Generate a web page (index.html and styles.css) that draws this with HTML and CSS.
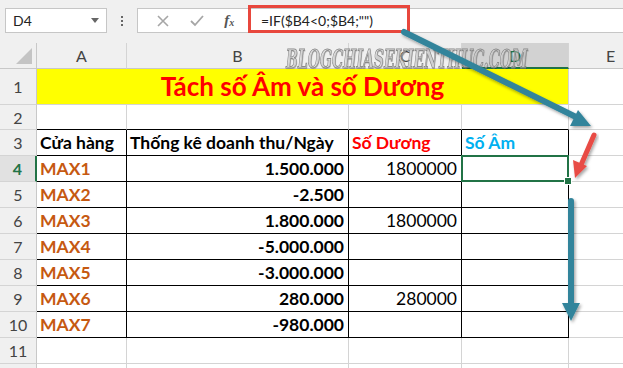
FILE: index.html
```html
<!DOCTYPE html>
<html lang="vi">
<head>
  <meta charset="UTF-8">
  <meta name="viewport" content="width=device-width, initial-scale=1.0">
  <title>Tách số Âm và số Dương</title>
  <link rel="stylesheet" href="styles.css">
</head>
<body>
  <div class="app">
    <div class="toolbar">
      <div class="namebox"><span>D4</span><span class="caret"></span></div>
      <div class="dots"><i></i><i></i><i></i></div>
      <div class="fbar">
        <div class="fbtns">
          <svg width="14" height="14" viewBox="0 0 14 14"><path d="M2 2 L12 12 M12 2 L2 12" stroke="#a6a6a6" stroke-width="1.6" fill="none"/></svg>
          <svg width="16" height="14" viewBox="0 0 16 14"><path d="M2 7 L6 11 L14 2" stroke="#a6a6a6" stroke-width="1.8" fill="none"/></svg>
          <span class="fx">f<sub>x</sub></span>
        </div>
        <div class="finput">=IF($B4&lt;0;$B4;"")</div>
      </div>
    </div>

    <div class="sheet">
      <div class="corner"></div>
      <div class="ch">A</div>
      <div class="ch">B</div>
      <div class="ch">C</div>
      <div class="ch on">D</div>
      <div class="ch">E</div>

      <div class="rh r1">1</div>
      <div class="title">Tách số Âm và số Dương</div>
      <div class="c"></div>

      <div class="rh">2</div>
      <div class="c top"></div>
      <div class="c top"></div>
      <div class="c top"></div>
      <div class="c top"></div>
      <div class="c"></div>

      <div class="rh">3</div>
      <div class="c t b">Cửa hàng</div>
      <div class="c t b">Thống kê doanh thu/Ngày</div>
      <div class="c t b red">Số Dương</div>
      <div class="c t b blue">Số Âm</div>
      <div class="c"></div>

      <div class="rh on">4</div>
      <div class="c t b org">MAX1</div>
      <div class="c t b num">1.500.000</div>
      <div class="c t num">1800000</div>
      <div class="c t sel"></div>
      <div class="c"></div>

      <div class="rh">5</div>
      <div class="c t b org">MAX2</div>
      <div class="c t b num">-2.500</div>
      <div class="c t"></div>
      <div class="c t"></div>
      <div class="c"></div>

      <div class="rh">6</div>
      <div class="c t b org">MAX3</div>
      <div class="c t b num">1.800.000</div>
      <div class="c t num">1800000</div>
      <div class="c t"></div>
      <div class="c"></div>

      <div class="rh">7</div>
      <div class="c t b org">MAX4</div>
      <div class="c t b num">-5.000.000</div>
      <div class="c t"></div>
      <div class="c t"></div>
      <div class="c"></div>

      <div class="rh">8</div>
      <div class="c t b org">MAX5</div>
      <div class="c t b num">-3.000.000</div>
      <div class="c t"></div>
      <div class="c t"></div>
      <div class="c"></div>

      <div class="rh">9</div>
      <div class="c t b org">MAX6</div>
      <div class="c t b num">280.000</div>
      <div class="c t num">280000</div>
      <div class="c t"></div>
      <div class="c"></div>

      <div class="rh">10</div>
      <div class="c t b org">MAX7</div>
      <div class="c t b num">-980.000</div>
      <div class="c t"></div>
      <div class="c t"></div>
      <div class="c"></div>

      <div class="rh">11</div>
      <div class="c"></div>
      <div class="c"></div>
      <div class="c"></div>
      <div class="c"></div>
      <div class="c"></div>

      <div class="rh"></div>
      <div class="c"></div>
      <div class="c"></div>
      <div class="c"></div>
      <div class="c"></div>
      <div class="c"></div>
    </div>

    <div class="watermark">BLOGCHIASEKIENTHUC.COM</div>

    <svg class="overlay" width="623" height="368" viewBox="0 0 623 368">
      <defs>
        <filter id="sh" x="-20%" y="-20%" width="140%" height="140%">
          <feDropShadow dx="1.5" dy="2" stdDeviation="1.5" flood-color="#000" flood-opacity="0.35"/>
        </filter>
      </defs>
      <rect x="249.5" y="6.5" width="159" height="25" fill="none" stroke="#e8473d" stroke-width="3"/>
      <g filter="url(#sh)" fill="#31849b" stroke="#31849b">
        <line x1="404" y1="32" x2="576" y2="117" stroke-width="6" stroke-linecap="round"/>
        <polygon points="591,126 578,110 570,126" stroke="none"/>
        <line x1="571" y1="201" x2="571" y2="305" stroke-width="6" stroke-linecap="round"/>
        <polygon points="562,303 580,303 571,321" stroke="none"/>
      </g>
      <g filter="url(#sh)" fill="#e84c45" stroke="#e84c45">
        <line x1="594" y1="135" x2="581" y2="165" stroke-width="5" stroke-linecap="round"/>
        <polygon points="575,178 587,166 573,160" stroke="none"/>
      </g>
    </svg>
  </div>
</body>
</html>
```

FILE: styles.css
```css
body {
  margin: 0;
  overflow: hidden;
  background: #fff;
  font-family: 'Lato', 'Noto Sans', sans-serif;
}
.app {
  position: relative;
  width: 623px;
  height: 368px;
  overflow: hidden;
}

/* formula bar */
.toolbar {
  height: 43px;
  background: #f0f0f0;
  display: flex;
  align-items: flex-start;
  padding: 8px 0 0 5px;
  box-sizing: border-box;
}
.namebox {
  width: 102px;
  height: 25px;
  box-sizing: border-box;
  background: #fff;
  border: 1px solid #c6c6c6;
  display: flex;
  align-items: center;
  justify-content: space-between;
  padding: 0 7px 0 7px;
  font-size: 14px;
  color: #222;
}
.caret {
  width: 0;
  height: 0;
  border-left: 4px solid transparent;
  border-right: 4px solid transparent;
  border-top: 5px solid #666;
}
.dots {
  width: 30px;
  height: 25px;
  display: flex;
  flex-direction: column;
  align-items: center;
  justify-content: center;
  gap: 2px;
}
.dots i {
  width: 2px;
  height: 2px;
  background: #666;
}
.fbar {
  flex: 1;
  height: 25px;
  display: flex;
  background: #fff;
  border: 1px solid #c6c6c6;
  border-right: none;
  box-sizing: border-box;
}
.fbtns {
  width: 110px;
  display: flex;
  align-items: center;
  justify-content: space-around;
  padding: 0 4px 0 8px;
  box-sizing: border-box;
}
.fx {
  font-family: 'Liberation Serif', serif;
  font-style: italic;
  font-weight: bold;
  font-size: 15px;
  color: #555;
}
.fx sub {
  font-size: 10px;
  vertical-align: -1px;
}
.finput {
  flex: 1;
  padding-left: 13px;
  font-size: 14px;
  line-height: 23px;
  color: #222;
}

/* grid */
.sheet {
  display: grid;
  grid-template-columns: 37px 90px 222px 113px 107px 84px;
  grid-template-rows: 26px 36px 25px repeat(10, 26px);
  width: 653px;
}
.sheet > div {
  box-sizing: border-box;
  border-right: 1px solid #d4d4d4;
  border-bottom: 1px solid #d4d4d4;
  white-space: nowrap;
  overflow: hidden;
}
.corner {
  background: #f0f0f0;
  position: relative;
  border-color: #c8c8c8 !important;
}
.corner::after {
  content: '';
  position: absolute;
  right: 4px;
  bottom: 4px;
  width: 0;
  height: 0;
  border-left: 16px solid transparent;
  border-bottom: 16px solid #c4c4c4;
}
.ch {
  background: #f0f0f0;
  text-align: center;
  font-size: 16px;
  line-height: 25px;
  color: #444;
  border-bottom-color: #c8c8c8 !important;
}
.ch.on {
  background: #d2d2d2;
  color: #217346;
  border-bottom: 2px solid #217346 !important;
}
.rh {
  background: #f0f0f0;
  text-align: center;
  font-size: 16px;
  line-height: 22px;
  padding-top: 2px;
  color: #444;
  border-right-color: #c8c8c8 !important;
}
.rh.r1 {
  padding-top: 7px;
}
.rh.on {
  background: #e1e1e1;
  color: #217346;
  font-weight: bold;
  border-right: 2px solid #217346 !important;
}
.title {
  grid-column: 2 / 6;
  background: #ffff00;
  color: #ff0000;
  font-weight: bold;
  font-size: 26px;
  line-height: 32px;
  padding-top: 1px;
  text-align: center;
  border-right-color: #d4d4d4;
}
.c {
  font-size: 17.5px;
  line-height: 22px;
  padding: 2px 4px 0 3px;
  color: #000;
}
.c.top {
  border-bottom-color: #000;
}
.c.t {
  border-right-color: #000;
  border-bottom-color: #000;
}
.b {
  font-weight: bold;
}
.num {
  text-align: right;
}
.red {
  color: #ff0000;
}
.blue {
  color: #00b0f0;
}
.org {
  color: #c65911;
}
.sel {
  position: relative;
  overflow: visible !important;
}
.sel::before {
  content: '';
  position: absolute;
  left: -1px;
  top: -1px;
  right: -1px;
  bottom: -1px;
  border: 2px solid #217346;
}
.sel::after {
  content: '';
  position: absolute;
  right: -4px;
  bottom: -4px;
  width: 6px;
  height: 6px;
  background: #217346;
  border: 1px solid #fff;
}

/* overlays */
.watermark {
  position: absolute;
  left: 286px;
  top: 46px;
  font-family: 'DejaVu Serif', serif;
  font-stretch: condensed;
  font-weight: bold;
  font-style: italic;
  font-size: 26px;
  line-height: 26px;
  color: rgba(255, 255, 255, 0.35);
  -webkit-text-stroke: 1px #8a8a8a;
  text-shadow: 1px 1px 1px rgba(0, 0, 0, 0.25);
  transform: scaleX(0.6);
  transform-origin: left top;
  white-space: nowrap;
}
.overlay {
  position: absolute;
  left: 0;
  top: 0;
  pointer-events: none;
}
```
